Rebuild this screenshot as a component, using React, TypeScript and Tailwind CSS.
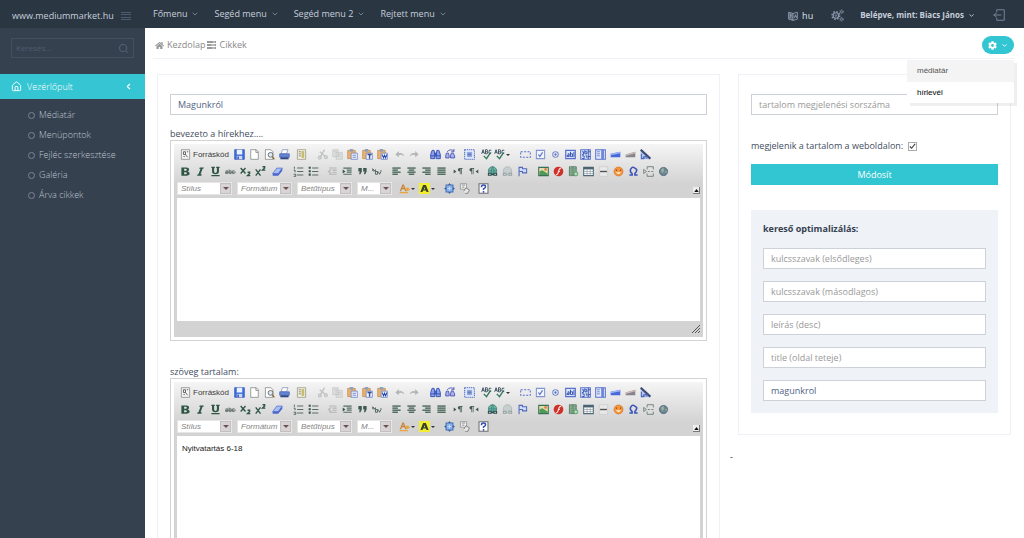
import React from "react";
import { FaHome, FaCog } from "react-icons/fa";
import { ChevronDown, ChevronLeft, House, Search } from "lucide-react";

const green = "#2f5545";
const blue = "#5872cc";
const faint = "#b3b5b6";

const textLines = (rows: [number, number][], color: string) => (
  <g fill={color}>
    {rows.map(([x, w], i) => (
      <rect key={i} x={x} y={2 + i * 3} width={w} height="2" />
    ))}
  </g>
);

const clipboard = (badge: React.ReactNode) => (
  <>
    <path d="M1 2h11v12H1z" fill="#edb36a" stroke="#b9884a" />
    <path d="M4 0h5v4H4z" fill="#8ea0bd" />
    <path d="M6 6h9v9H6z" fill="#f3f6ff" stroke="#5a72c0" />
    {badge}
  </>
);

const abc = (
  <>
    <path d="M1 7l2-6 2 6M2 5h2M6.500 1v6h2q2 0 1-3q1-3-1-3zM6.500 4h2M15 2q-3-2-3.500 2t3.500 2" fill="none" stroke="#34495a" strokeWidth="1.300" />
    <path d="M4 10l4 4 6-9" fill="none" stroke="#34775a" strokeWidth="2" />
  </>
);

const icons: Record<string, React.ReactNode> = {
  source: (
    <>
      <path d="M2 1h12v14H2z" fill="#f5f5f5" stroke="#777" />
      <path d="M5 4h3v4M5 4v4h3M8 8l3 4M10 4h2M5 11h2" fill="none" stroke="#555" strokeWidth="1.300" />
    </>
  ),
  save: (
    <>
      <path d="M1 1h14v14H1z" fill="#3d6fe0" stroke="#2749b3" />
      <path d="M4 1h8v7H4z" fill="#e9f1ff" />
      <path d="M4 10h8v5H4z" fill="#cfd8e8" />
      <path d="M5 11h2v4H5z" fill="#2749b3" />
    </>
  ),
  page: <path d="M2.500 1h8l3 3v11h-11zM10 1v4h3.500" fill="#fff" stroke="#737b78" />,
  preview: (
    <>
      <path d="M2 1h8l3 3v11H2z" fill="#fff" stroke="#777" />
      <circle cx="9.500" cy="8.500" r="3.500" fill="#dce9f4" stroke="#666" strokeWidth="1.300" />
      <path d="M12 11l3 4" stroke="#8a6a3a" strokeWidth="2" />
    </>
  ),
  print: (
    <>
      <path d="M5 1h8l-2 6H3z" fill="#fff" stroke="#7a86b0" />
      <path d="M1 7h14v5H1z" fill="#6486d8" stroke="#4560ab" />
      <path d="M2 12h12v3H2z" fill="#354985" />
    </>
  ),
  template: (
    <>
      <path d="M2 1h12v14H2z" fill="#f4f1dc" stroke="#8a8a78" />
      <path d="M8 3h4v10H8z" fill="#c6bb72" />
      <path d="M4 4h3M4 7h3M4 10h3" stroke="#555" />
    </>
  ),
  cut: (
    <g fill="none" stroke="#c0c2c4" strokeWidth="2">
      <path d="M11 1L5 11M4 4l8 7" />
      <circle cx="4" cy="12.500" r="2" />
      <circle cx="13" cy="12" r="2" />
    </g>
  ),
  copy: (
    <g fill="#dddede" stroke="#c2c4c5">
      <path d="M1 1h8v10H1zM6 5h9v10H6z" />
      <path d="M8 8h5M8 11h5M3 4h4" />
    </g>
  ),
  paste: clipboard(<path d="M8 9h5M8 12h5" stroke="#7486cd" strokeWidth="1.500" />),
  pasteText: clipboard(<path d="M8 8h6M11 8v6" stroke="#334f98" strokeWidth="2" />),
  pasteWord: clipboard(<path d="M7.500 8l2 5 1.500-4 1.500 4 2-5" fill="none" stroke="#2547b5" strokeWidth="1.500" />),
  undo: <path d="M7 3L2 8l5 4V9q5-2 8 2-1-6-8-5z" fill={faint} />,
  redo: <path d="M9 3l5 5-5 4V9q-5-2-8 2 1-6 8-5z" fill={faint} />,
  find: (
    <g fill="#8ba0ef" stroke="#344cae" strokeWidth="1.300">
      <path d="M3 2h3l1 6v6H1V8zM10 2h3l2 6v6H9V8zM7 6h2v4H7zM1 10h6M9 10h6" />
    </g>
  ),
  replace: (
    <g fill="#a9b2ee" stroke="#4b55b5" strokeWidth="1.300">
      <path d="M2 6h3l1 4v3H1v-3zM9 6h3l2 4v3H8v-3z" />
      <path d="M3 4q5-5 10-1M13 0v4h-4" fill="none" />
    </g>
  ),
  selectAll: (
    <>
      <path d="M1 1h14v14H1z" fill="#eaf0ff" stroke="#4c6bc0" strokeWidth="1.500" strokeDasharray="2 1" />
      <path d="M4 4h8v8H4z" fill="#a8bdec" />
      <path d="M5 6h6M5 8h6M5 10h6" stroke="#4561aa" />
    </>
  ),
  spell: abc,
  scayt: abc,
  form: <path d="M1 4h14v8H1z" fill="none" stroke={blue} strokeWidth="1.500" strokeDasharray="3 2" />,
  checkbox: (
    <>
      <path d="M2 2h12v12H2z" fill="#f1f4ff" stroke="#8295cd" strokeWidth="1.500" />
      <path d="M5 8l2 3 4-6" fill="none" stroke={blue} strokeWidth="1.700" />
    </>
  ),
  radio: (
    <>
      <circle cx="8" cy="8" r="4" fill="#fff" stroke="#7388c9" strokeWidth="1.500" />
      <circle cx="8" cy="8" r="1.700" fill="#5b70bd" />
    </>
  ),
  textField: (
    <>
      <path d="M1 2h14v12H1z" fill="#dfe7ff" stroke={blue} strokeWidth="1.700" />
      <path d="M4 7h2v4H3V9h3M8 4v7h3V7H8M13 4v8" fill="none" stroke="#2c48a5" strokeWidth="1.300" />
    </>
  ),
  textArea: (
    <>
      <path d="M1 1h14v14H1z" fill="#dfe7ff" stroke={blue} strokeWidth="1.500" />
      <path d="M3 4h2v4H3M7 2v5h3V4H7M3 10h3v4H3M8 10h2v3M12 1v14M12 4h3M12 11h3" fill="none" stroke="#2c48a5" strokeWidth="1.300" />
    </>
  ),
  select: (
    <>
      <path d="M1 1h14v14H1z" fill="#e5ebff" stroke={blue} strokeWidth="1.500" />
      <path d="M9 1h4v14H9z" fill="#6f86d4" />
      <path d="M3 4h4M3 7h4M3 10h4" stroke="#6178c0" strokeWidth="1.300" />
    </>
  ),
  button: (
    <>
      <path d="M1 7l14-3v8H1z" fill="#4669dc" />
      <path d="M1 7l14-3v2L1 9z" fill="#a5b9f6" />
    </>
  ),
  imageButton: (
    <>
      <path d="M1 8l14-4v8H1z" fill="#85858d" />
      <path d="M1 8l14-4v2L1 10z" fill="#d0bcb4" />
    </>
  ),
  hidden: (
    <>
      <path d="M1 1l14 12v2H1z" fill="#b6c5ef" />
      <path d="M1 1l14 13" fill="none" stroke="#3c4b74" strokeWidth="3" />
      <path d="M2 7v7h3v-3M7 14v-3h3v3" fill="none" stroke="#4c66b9" strokeWidth="1.500" />
      <path d="M8 0h7v10z" fill="#f2f2f2" />
    </>
  ),
  bold: <path fillRule="evenodd" d="M2 2h7q5 0 4 4 0 1-2 2 3 1 3 3 0 3-5 3H2zM6 4v3h2q2 0 2-1.500T8 4zM6 9v3h2q2 0 2-1.500T8 9z" fill={green} />,
  italic: <path d="M7 2h6l-1 2h-1L8 12h2l-1 2H3l1-2h1L8 4H6z" fill={green} />,
  underline: <path d="M2 1h5v2H6v5q0 2 2 2t2-2V3H9V1h5v2h-1v5q0 4-5 4T3 8V3H2zM2 13h12v2H2z" fill={green} />,
  strike: <path d="M1 7h3v4H1V9h3M6 5v6h3V7H6M14 7h-3v4h3M0 9h16" fill="none" stroke="#5a6963" strokeWidth="1.200" />,
  sub: <path d="M1 3l7 8M8 3l-7 8M11 9h3v2l-3 3h4" fill="none" stroke={green} strokeWidth="2" />,
  sup: <path d="M1 5l7 9M8 5l-7 9M11 1h3v2l-3 3h4" fill="none" stroke={green} strokeWidth="2" />,
  eraser: (
    <>
      <path d="M7 3h8l-6 8H1z" fill="#a9bdf6" stroke="#4c67c5" />
      <path d="M1 11h8v3H1zM9 11l6-8v4l-6 7z" fill="#4867cf" />
    </>
  ),
  ol: (
    <>
      <path d="M2 1v3M1 6h2v3M1 12h3v3H1" fill="none" stroke="#435a50" strokeWidth="1.300" />
      <path d="M6 3h9M6 8h9M6 13h9" stroke="#5a6b63" strokeWidth="1.600" />
    </>
  ),
  ul: (
    <>
      <path d="M1 1h3v3H1zM1 6h3v3H1zM1 11h3v3H1z" fill={green} />
      <path d="M6 3h9M6 8h9M6 13h9" stroke="#5a6b63" strokeWidth="1.600" />
    </>
  ),
  outdent: <path d="M3 3h11M8 6h6M8 9h6M3 12h11M6 5L2 8l4 3" fill="none" stroke={faint} strokeWidth="1.600" />,
  indent: (
    <>
      <path d="M2 3h12M7 6h7M7 9h7M2 12h12" stroke="#526d60" strokeWidth="1.800" />
      <path d="M1 5l4 3-4 3z" fill={green} />
    </>
  ),
  quote: <path d="M2 3h5v5l-2 4H3l1-4H2zM9 3h5v5l-2 4h-2l1-4H9z" fill="#3f5a4e" />,
  div: <path d="M1 4l3 3M1 4v3h3M5 5v7h3V8H5M9 8l2 4 2-4M13 6v2" fill="none" stroke="#52685e" strokeWidth="1.400" />,
  left: textLines([[2, 12], [2, 8], [2, 12], [2, 8]], "#486558"),
  center: textLines([[2, 12], [4, 8], [2, 12], [4, 8]], "#486558"),
  right: textLines([[2, 12], [6, 8], [2, 12], [6, 8]], "#486558"),
  justify: textLines([[2, 12], [2, 12], [2, 12], [2, 12]], "#486558"),
  ltr: <path d="M1 5l4 3-4 3zM14 3v1h-1v8h-1V4h-1v8h-1V8Q7 8 7 5.500T10 3z" fill="#42584e" />,
  rtl: <path d="M15 5l-4 3 4 3zM9 3v1H8v8H7V4H6v8H5V8Q2 8 2 5.500T5 3z" fill="#42584e" />,
  link: (
    <>
      <circle cx="8" cy="7" r="6" fill="#6db994" stroke="#2c6f70" />
      <path d="M2 7h12M8 1q-4 6 0 12M8 1q4 6 0 12" fill="none" stroke="#3a7a95" />
      <path d="M2 10.500h4v3H2zM10 10.500h4v3h-4zM6 12h4" fill="#d7dfdc" stroke="#29484b" strokeWidth="1.500" />
    </>
  ),
  unlink: (
    <>
      <circle cx="8" cy="7" r="6" fill="#c6cfce" stroke="#a4b0b0" />
      <path d="M2 10.500h4v3H2zM10 10.500h4v3h-4z" fill="#dcdfde" stroke="#93a3a3" strokeWidth="1.500" />
    </>
  ),
  anchor: <path d="M3 1v14M3 2h5v2h6v6H8V8H3" fill="#cfdbff" stroke="#5069b5" strokeWidth="1.500" />,
  image: (
    <>
      <path d="M1 2h14v12H1z" fill="#e6dba8" stroke="#397158" strokeWidth="1.500" />
      <path d="M2 8l4-2 8 5v2H2z" fill="#4e9a58" />
      <circle cx="11" cy="5" r="2" fill="#de8052" />
    </>
  ),
  flash: (
    <>
      <circle cx="8" cy="8" r="7" fill="#cf3027" />
      <path d="M12 3q-3 0-4 5t-4 5M7 8h3" fill="none" stroke="#f6e2e0" strokeWidth="1.700" />
    </>
  ),
  media: (
    <>
      <path d="M2 1h10v13H2z" fill="#719a7e" stroke="#436b51" />
      <path d="M4 1v13M10 1v8" stroke="#b7ccb9" strokeDasharray="2 1" />
      <circle cx="11.500" cy="11.500" r="3.500" fill="#58a262" />
      <path d="M11.500 9v5M9 11.500h5" stroke="#fff" />
    </>
  ),
  table: (
    <>
      <path d="M1 2h14v12H1z" fill="#fff" stroke="#4b6474" strokeWidth="1.500" />
      <path d="M1 2h14v3H1z" fill="#4b6474" />
      <path d="M1 8h14M1 11h14M6 5v9M10.500 5v9" stroke="#8b9ca7" />
    </>
  ),
  hr: (
    <>
      <path d="M2 1h12v14H2z" fill="#e8e8e8" stroke="#c9c9c9" />
      <path d="M3 8h10" stroke="#525252" strokeWidth="2" />
    </>
  ),
  smiley: (
    <>
      <circle cx="8" cy="8" r="6.500" fill="#f3963d" stroke="#d77222" />
      <path d="M4 9q4 5 8 0z" fill="#fff1d6" />
      <path d="M5 5v2M11 5v2" stroke="#874119" strokeWidth="1.500" />
    </>
  ),
  omega: <path d="M2 13h4v-2Q2 8 4 4.500T8 2t4 2.500T10 11v2h4" fill="none" stroke="#3c55b9" strokeWidth="2.300" />,
  pageBreak: <path d="M6 5V1h9v4M6 11v4h9v-4M7 8h3M12 8h3M1 5l4 3-4 3z" fill="none" stroke="#75847e" strokeWidth="1.400" />,
  iframe: (
    <>
      <circle cx="8" cy="8" r="6" fill="#6c8593" stroke="#475d70" />
      <path d="M4 5l4-2 1 4-3 4zM10 8l3-1-1 4z" fill="#9aaf9f" />
    </>
  ),
  textColor: (
    <>
      <path d="M1 12L5 2h2l4 10H9L8 9H4l-1 3zM5 7h2L6 4z" fill="#c88337" fillRule="evenodd" />
      <path d="M9 8l4-2 3 4-5 2zM1 13h12v2H1z" fill="#e9a63a" />
    </>
  ),
  bgColor: (
    <>
      <path d="M0 0h16v16H0z" fill="#f3ee31" />
      <path d="M2 13L6 3h4l4 10h-3l-1-2H6l-1 2zM7 9h2L8 6z" fill="#38432e" fillRule="evenodd" />
    </>
  ),
  maximize: (
    <>
      <path d="M3 3h10v10H3z" fill="#85b0e9" stroke="#426fb2" strokeWidth="1.500" />
      <path d="M8 0l2 3H6zM8 16l2-3H6zM0 8l3-2v4zM16 8l-3-2v4z" fill="#3c5f9c" />
      <path d="M5 8h6M8 5v6" stroke="#d3e7ff" />
    </>
  ),
  blocks: (
    <>
      <path d="M2 1h9v8H2z" fill="#f5f5f5" stroke="#7e8580" />
      <path d="M4 3h5M4 6h4M7 12l3-5 5 3-2 5H9" fill="#e7e7e7" stroke="#5e6762" />
    </>
  ),
  about: (
    <>
      <path d="M1.500 1h13v14h-13z" fill="#fff" stroke="#6d6d6d" strokeWidth="1.500" />
      <path d="M5 6q0-3 3-3t3 2.500q0 1.500-3 3V10M8 11.500V14" fill="none" stroke="#344fae" strokeWidth="2.200" />
    </>
  ),
};

const arrowIcons = ["scayt", "textColor", "bgColor"];

function Tool({ name }: { name: string }) {
  return (
    <button type="button" aria-label={name} className="flex h-4 min-w-[15px] items-center justify-center">
      <svg viewBox="0 0 16 16" className="size-[11px] shrink-0">{icons[name]}</svg>
      {arrowIcons.includes(name) && (
        <svg viewBox="0 0 4 4" className="ml-px size-1"><path d="M0 1h4L2 3z" fill="#333" /></svg>
      )}
    </button>
  );
}

function Group({ names }: { names: string[] }) {
  return <div className="flex">{names.map((n) => <Tool key={n} name={n} />)}</div>;
}

function Combo({ label, short }: { label: string; short?: boolean }) {
  return (
    <button
      type="button"
      className={`flex h-[13px] items-center justify-between border border-[#e6e6e6] bg-white pl-[3px] text-[8px] text-[#858585] italic ${short ? "w-[35px]" : "w-[55px]"}`}
    >
      {label}
      <span className="flex h-[11px] w-[11px] items-center justify-center border border-[#c5bfc0] bg-[#d8d3d4]">
        <svg viewBox="0 0 6 4" className="h-1 w-1.5"><path d="M0 0h6L3 3z" fill="#6b5257" /></svg>
      </span>
    </button>
  );
}

function Editor({ label, text }: { label: string; text?: string }) {
  return (
    <section>
      <h2 className="text-[9px] leading-[13px] text-[#3f4d61]">{label}</h2>
      <div className="border border-[#d3d3d3] p-[3px] font-['Liberation_Sans',Arial,sans-serif]">
        <div className="bg-[#d3d3d3] bg-linear-to-b from-[#f5f5f5] to-[#d3d3d3] bg-[length:100%_40px] bg-no-repeat px-[3px]">
          <div className="relative h-[54px] pt-0.5">
            <div className="flex h-[17px] items-center">
              <button type="button" className="mr-[3px] flex h-4 items-center gap-0.5 pl-[3px] text-[8px] text-[#3c3c3c]">
                <svg viewBox="0 0 16 16" className="size-[11px]">{icons.source}</svg>
                Forráskód
              </button>
              <div className="flex">
                <Group names={["save", "page", "preview", "print"]} />
                <div className="ml-0.5"><Group names={["template"]} /></div>
                <div className="ml-1.5"><Group names={["cut", "copy", "paste", "pasteText", "pasteWord"]} /></div>
                <div className="ml-0.5"><Group names={["undo", "redo"]} /></div>
                <div className="ml-1.5"><Group names={["find", "replace"]} /></div>
                <div className="ml-1"><Group names={["selectAll"]} /></div>
                <div className="ml-0.5"><Group names={["spell", "scayt"]} /></div>
                <div className="ml-2"><Group names={["form", "checkbox", "radio", "textField", "textArea", "select", "button", "imageButton", "hidden"]} /></div>
              </div>
            </div>
            <div className="flex h-[17px] items-center pl-px">
              <Group names={["bold", "italic", "underline", "strike", "sub", "sup"]} />
              <div className="ml-0.5"><Group names={["eraser"]} /></div>
              <div className="ml-1.5"><Group names={["ol", "ul"]} /></div>
              <div className="ml-1"><Group names={["outdent", "indent", "quote", "div"]} /></div>
              <div className="ml-1"><Group names={["left", "center", "right", "justify"]} /></div>
              <div className="ml-0.5"><Group names={["ltr", "rtl"]} /></div>
              <div className="ml-1"><Group names={["link", "unlink", "anchor"]} /></div>
              <div className="ml-1.5"><Group names={["image", "flash", "media", "table", "hr", "smiley", "omega", "pageBreak", "iframe"]} /></div>
            </div>
            <div className="flex h-[17px] items-center gap-[5px]">
              <Combo label="Stílus" />
              <Combo label="Formátum" />
              <Combo label="Betűtípus" />
              <Combo label="M..." short />
              <div className="ml-0.5 flex">
                <Group names={["textColor"]} />
                <div className="ml-1"><Group names={["bgColor"]} /></div>
              </div>
              <div className="ml-0.5 flex">
                <Group names={["maximize", "blocks"]} />
                <div className="ml-1"><Group names={["about"]} /></div>
              </div>
            </div>
            <button type="button" aria-label="collapse" className="absolute right-0 bottom-1 flex size-[7px] items-center justify-center border-r border-b border-[#777] bg-[#eee]">
              <svg viewBox="0 0 6 4" className="h-[3px] w-[5px]"><path d="M0 4h6L3 0z" fill="#111" /></svg>
            </button>
          </div>
          <textarea
            aria-label={label}
            defaultValue={text}
            className="block h-[123px] w-full resize-none bg-white px-[5px] pt-[7px] text-[8px] leading-3 text-[#222] outline-none"
          />
          <div className="flex h-[16px] items-center justify-end">
            <svg viewBox="0 0 8 8" className="size-2"><path d="M0 8l8-8M3 8l5-5M6 8l2-2" stroke="#555" /></svg>
          </div>
        </div>
      </div>
    </section>
  );
}

function Field({ label, value }: { label: string; value?: string }) {
  return (
    <input
      type="text"
      aria-label={label}
      placeholder={value ? undefined : label}
      defaultValue={value}
      className="block h-[21px] w-full border border-[#cdd2da] bg-white px-[7px] text-[9px] text-[#4f6384] outline-none placeholder:text-[#999]"
    />
  );
}

export default function App() {
  return (
    <div className="flex min-h-screen flex-col bg-white font-['Open_Sans','Noto_Sans',sans-serif] text-[9px] leading-[14px]">
      <header className="flex h-7 items-center bg-[#2b3643] text-[#c6cfda]">
        <div className="flex w-[145px] shrink-0 items-center justify-between pt-[3px] pr-3.5 pl-3">
          <a href="#">www.mediummarket.hu</a>
          <button type="button" aria-label="menü">
            <svg viewBox="0 0 10 10" className="size-2.5" stroke="#4d5b6c">
              <path d="M0 1.500h10M0 3.500h10M0 6.500h10M0 8.500h10" />
            </svg>
          </button>
        </div>
        <nav className="flex flex-1 gap-[15px] pl-2">
          {["Főmenu", "Segéd menu", "Segéd menu 2", "Rejtett menu"].map((m) => (
            <a key={m} href="#" className="flex items-center gap-1">
              {m}
              <ChevronDown className="size-2 text-[#708096]" strokeWidth={3} />
            </a>
          ))}
        </nav>
        <div className="flex items-center pt-0.5 pr-[19px]">
          <a href="#" className="flex items-center gap-1 pt-0.5 text-[#dde3ec]">
            <svg viewBox="0 0 16 16" className="size-[10px]" fill="none" stroke="#8a97a9" strokeWidth="1.500">
              <path d="M1 2l7 2v11l-7-2z" fill="#5b6878" />
              <path d="M8 4l7-2v11l-7 2M3 6l3 1M4 6q1 4-1 5M10 11l2-5 2 5M11 9h2" />
            </svg>
            hu
          </a>
          <button type="button" aria-label="beállítások" className="ml-[18px]">
            <svg viewBox="0 0 24 24" className="size-[13px]" fill="none" stroke="#8a97a9">
              <circle cx="9" cy="12" r="5" strokeWidth="2" />
              <circle cx="9" cy="12" r="7" strokeWidth="3" strokeDasharray="2.750 2.750" />
              <circle cx="9" cy="12" r="1.500" strokeWidth="1.500" />
              <circle cx="19.500" cy="5" r="2" strokeWidth="1.500" />
              <circle cx="19.500" cy="5" r="3.500" strokeWidth="1.500" strokeDasharray="1.570 2.100" />
              <circle cx="19.500" cy="19" r="2" strokeWidth="1.500" />
              <circle cx="19.500" cy="19" r="3.500" strokeWidth="1.500" strokeDasharray="1.570 2.100" />
            </svg>
          </button>
          <button type="button" className="ml-4 flex items-center gap-1 text-[8px] font-bold">
            Belépve, mint: Biacs János
            <ChevronDown className="size-[7px]" strokeWidth={3} />
          </button>
          <button type="button" aria-label="kilépés" className="ml-[18px]">
            <svg viewBox="0 0 16 16" className="size-3" fill="none" stroke="#75859a" strokeWidth="1.300">
              <path d="M5 4V1h10v14H5v-3M11 8H1M5 5L1 8l4 3" />
            </svg>
          </button>
        </div>
      </header>

      <div className="flex flex-1">
        <aside className="w-[145px] shrink-0 bg-[#364150] font-light text-[#bcc4cf]">
          <div className="mx-[11px] mt-2.5 mb-4 flex h-5 items-center border border-[#435060] pr-1 pl-1">
            <input type="text" aria-label="Keresés" placeholder="Keresés..." className="min-w-0 flex-1 text-[8px] font-normal outline-none placeholder:text-[#4e5c6d]" />
            <Search className="size-[11px] text-[#56647a]" />
          </div>
          <a href="#" className="flex h-[25px] items-center gap-[5px] bg-[#36c6d3] pr-3 pl-[11px] text-white">
            <House className="size-[11px]" strokeWidth={2} />
            <span className="flex-1">Vezérlőpult</span>
            <ChevronLeft className="size-[9px]" strokeWidth={3} />
          </a>
          <ul className="pt-1.5">
            {["Médiatár", "Menüpontok", "Fejléc szerkesztése", "Galéria", "Árva cikkek"].map((m) => (
              <li key={m}>
                <a href="#" className="flex h-5 items-center gap-1 pl-7">
                  <span className="size-[7px] rounded-full border border-[#7b8796]" />
                  {m}
                </a>
              </li>
            ))}
          </ul>
        </aside>

        <main className="min-w-0 flex-1 pb-3">
          <div className="relative mr-2.5 ml-2 flex h-[31px] items-center justify-between border-b border-[#eef1f5] pl-0.5">
            <nav className="flex items-center gap-[3px] pt-1 text-[#888]">
              <FaHome className="size-[9px] text-[#999]" />
              <a href="#">Kezdolap</a>
              <svg viewBox="0 0 9 8" className="-ml-px h-2 w-[9px]">
                <path d="M0 0h9v2H0zM0 3h9v2H0zM0 6h9v2H0z" fill="#999" />
                <path d="M6 .5h2v1H6zM4 3.500h4v1H4zM5 6.500h3v1H5z" fill="#ddd" />
              </svg>
              <a href="#">Cikkek</a>
            </nav>
            <button type="button" aria-label="műveletek" className="mt-1 flex h-[18px] w-8 items-center justify-center gap-1 rounded-full bg-[#32c5d2] text-white">
              <FaCog className="size-[9px]" />
              <ChevronDown className="size-[7px]" strokeWidth={3} />
            </button>
            <div className="absolute top-8 right-0 z-10 w-[107px] bg-white font-['Liberation_Sans',Arial,sans-serif] text-[8px] shadow-[3px_3px_0_rgba(102,102,102,0.1)]">
              <a href="#" className="flex h-[22px] items-center bg-[#f4f4f4] pl-2.5 text-[#555]">médiatár</a>
              <a href="#" className="flex h-[21px] items-center pl-2.5 text-black">hírlevél</a>
            </div>
          </div>

          <div className="mt-[15px] grid grid-cols-[563fr_281fr] items-start gap-2.5 pr-[13px] pl-3">
            <div className="flex flex-col border border-[#eef1f5] px-3 pt-[19px] pb-3">
              <Field label="cím" value="Magunkról" />
              <div className="mt-3 flex flex-col gap-6">
                <Editor label="bevezeto a hírekhez...." />
                <Editor label="szöveg tartalam:" text="Nyitvatartás 6-18" />
              </div>
            </div>

            <div>
              <div className="ml-2 border border-[#eef1f5] px-3 pt-[19px] pb-[21px]">
                <Field label="tartalom megjelenési sorszáma" />
                <label className="relative mt-6 flex items-center gap-[5px] text-[#3f4d61]">
                  megjelenik a tartalom a weboldalon:
                  <input type="checkbox" defaultChecked className="peer sr-only" />
                  <span className="flex size-[9px] items-center justify-center border border-[#aaa] bg-white [&>svg]:invisible peer-checked:[&>svg]:visible">
                    <svg viewBox="0 0 8 8" className="size-[7px]"><path d="M1 4l2 2 4-5" fill="none" stroke="#444" strokeWidth="1.300" /></svg>
                  </span>
                </label>
                <button type="button" className="mt-[11px] block h-[21px] w-full bg-[#32c5d2] text-white">Módosít</button>
                <div className="mt-[25px] bg-[#eff3f8] p-3">
                  <h3 className="mb-3 font-bold text-[#364150]">kereső optimalizálás:</h3>
                  <div className="flex flex-col gap-3">
                    <Field label="kulcsszavak (elsődleges)" />
                    <Field label="kulcsszavak (másodlagos)" />
                    <Field label="leírás (desc)" />
                    <Field label="title (oldal teteje)" />
                    <Field label="url" value="magunkrol" />
                  </div>
                </div>
              </div>
              <p className="mt-[15px] text-[#333]">-</p>
            </div>
          </div>
        </main>
      </div>
    </div>
  );
}
